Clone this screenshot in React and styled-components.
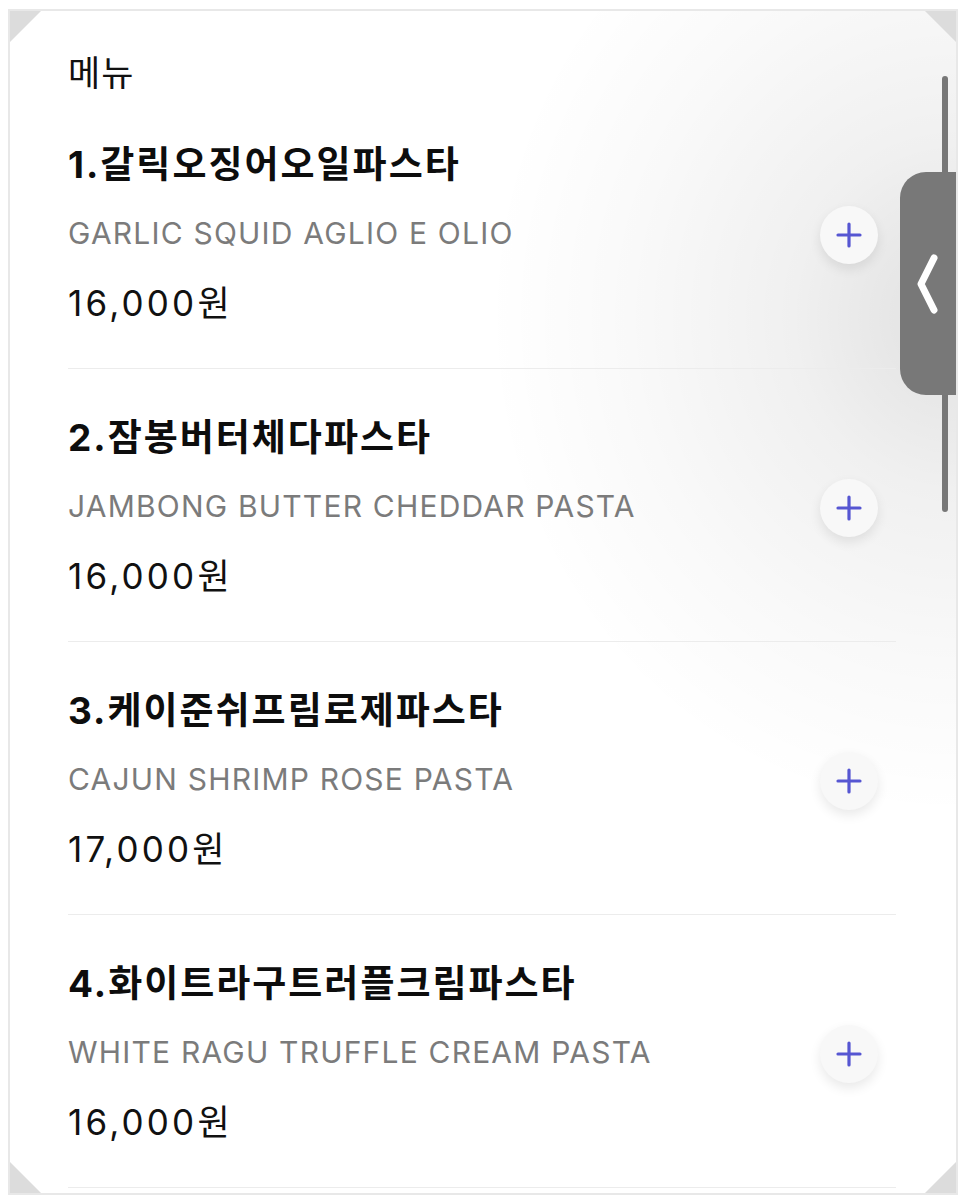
import React from "react";
import styled, { createGlobalStyle } from "styled-components";

const GlobalStyle = createGlobalStyle`
  html, body {
    margin: 0;
    padding: 0;
    background: #ffffff;
  }
  body {
    font-family: "Inter", "Noto Sans CJK KR", sans-serif;
    color: #111111;
  }
`;

const Page = styled.div`
  padding: 9px 8px 8px 8px;
`;

const Frame = styled.div`
  position: relative;
  height: 1182px;
  border: 2px solid #e8e8e8;
  overflow: hidden;
  background: #ffffff;
`;

const Corner = styled.div`
  position: absolute;
  z-index: 5;
  width: 31px;
  height: 31px;
  background: #dcdcdc;
  ${props => (props.top ? "top: 0;" : "bottom: 0;")}
  ${props => (props.left ? "left: 0;" : "right: 0;")}
  clip-path: ${props =>
    props.top && props.left
      ? "polygon(0 0, 100% 0, 0 100%)"
      : props.top
      ? "polygon(0 0, 100% 0, 100% 100%)"
      : props.left
      ? "polygon(0 0, 0 100%, 100% 100%)"
      : "polygon(100% 0, 100% 100%, 0 100%)"};
`;

const Content = styled.div`
  position: relative;
  z-index: 2;
  padding: 0 60px 0 58px;
`;

const Heading = styled.h2`
  margin: 0;
  padding-top: 35px;
  font-family: "Noto Sans CJK KR", sans-serif;
  font-size: 35px;
  font-weight: 400;
  letter-spacing: 1px;
  line-height: 50px;
  color: #111111;
`;

const List = styled.ul`
  list-style: none;
  margin: 0;
  padding: 0;
`;

const Item = styled.li`
  display: flex;
  align-items: center;
  justify-content: space-between;
  padding: 35px 0 29px 0;
  border-bottom: 1px solid #ececec;
`;

const Info = styled.div`
  display: flex;
  flex-direction: column;
`;

const Title = styled.div`
  font-family: "Inter", "Noto Sans CJK KR", sans-serif;
  font-size: 37px;
  font-weight: 700;
  letter-spacing: 2px;
  line-height: 68px;
  color: #0d0d0d;
`;

const EnglishName = styled.div`
  font-family: "Inter", sans-serif;
  font-size: 30px;
  font-weight: 400;
  letter-spacing: 1.2px;
  line-height: 68px;
  color: #7b7b7b;
`;

const Price = styled.div`
  font-family: "Inter", "Noto Sans CJK KR", sans-serif;
  font-size: 35px;
  font-weight: 400;
  letter-spacing: 3.2px;
  line-height: 72px;
  color: #111111;
`;

const AddButton = styled.button`
  flex: none;
  width: 58px;
  height: 58px;
  margin-right: 18px;
  border: none;
  border-radius: 50%;
  background: #f8f8f8;
  box-shadow: 0 5px 12px rgba(0, 0, 0, 0.09);
  display: flex;
  align-items: center;
  justify-content: center;
  padding: 0;
  cursor: pointer;
`;

const ScrollTrack = styled.div`
  position: absolute;
  z-index: 3;
  top: 65px;
  right: 8px;
  width: 6px;
  height: 436px;
  border-radius: 3px;
  background: #777777;
`;

const Handle = styled.div`
  position: absolute;
  z-index: 4;
  top: 161px;
  right: 0;
  width: 56px;
  height: 223px;
  border-radius: 26px 0 0 26px;
  background: #787878;
  display: flex;
  align-items: center;
  justify-content: center;
`;

const Glow = styled.div`
  position: absolute;
  z-index: 1;
  top: 0;
  right: 0;
  width: 560px;
  height: 900px;
  pointer-events: none;
  background: radial-gradient(
    ellipse 470px 500px at 100% 34%,
    rgba(0, 0, 0, 0.12) 0%,
    rgba(0, 0, 0, 0.06) 35%,
    rgba(0, 0, 0, 0.025) 70%,
    rgba(0, 0, 0, 0) 100%
  );
`;

const menu = [
  { name: "1.갈릭오징어오일파스타", en: "GARLIC SQUID AGLIO E OLIO", price: "16,000원" },
  { name: "2.잠봉버터체다파스타", en: "JAMBONG BUTTER CHEDDAR PASTA", price: "16,000원" },
  { name: "3.케이준쉬프림로제파스타", en: "CAJUN SHRIMP ROSE PASTA", price: "17,000원" },
  { name: "4.화이트라구트러플크림파스타", en: "WHITE RAGU TRUFFLE CREAM PASTA", price: "16,000원" }
];

function PlusIcon() {
  return (
    <svg width="26" height="26" viewBox="0 0 26 26">
      <path d="M13 2v22M2 13h22" stroke="#5656d2" strokeWidth="3.2" strokeLinecap="round" />
    </svg>
  );
}

function App() {
  return (
    <Page>
      <GlobalStyle />
      <Frame>
        <Corner top left />
        <Corner top />
        <Corner left />
        <Corner />
        <Glow />
        <Content>
          <Heading>메뉴</Heading>
          <List>
            {menu.map(item => (
              <Item key={item.name}>
                <Info>
                  <Title>{item.name}</Title>
                  <EnglishName>{item.en}</EnglishName>
                  <Price>{item.price}</Price>
                </Info>
                <AddButton aria-label="추가">
                  <PlusIcon />
                </AddButton>
              </Item>
            ))}
          </List>
        </Content>
        <ScrollTrack />
        <Handle>
          <svg width="24" height="62" viewBox="0 0 24 62">
            <polyline
              points="18,5 5,31 18,57"
              fill="none"
              stroke="#ffffff"
              strokeWidth="7"
              strokeLinecap="round"
              strokeLinejoin="round"
            />
          </svg>
        </Handle>
      </Frame>
    </Page>
  );
}

export default App;
